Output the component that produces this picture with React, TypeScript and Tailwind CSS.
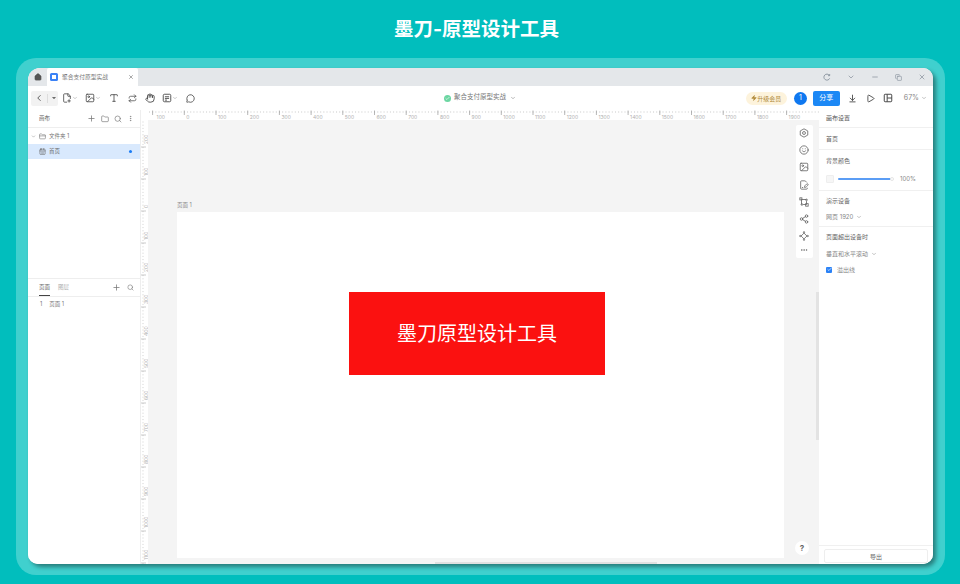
import React from "react";
import {
  ArrowDownToLine,
  ChevronDown,
  ChevronLeft,
  Copy,
  Ellipsis,
  EllipsisVertical,
  FilePenLine,
  FilePlus2,
  Folder,
  FolderClosed,
  Hand,
  Home,
  Image,
  MessageCircle,
  Minus,
  Play,
  Plus,
  Repeat,
  Search,
  Share2,
  Smile,
  Type,
  X,
  Zap,
  Check,
  CalendarDays,
} from "lucide-react";

const CJK = "font-['Inter','Noto_Sans_CJK_SC',sans-serif]";

function HorizontalRuler() {
  return (
    <svg width="678" height="10" className="block bg-white">
      {Array.from({ length: 212 }, (_, i) => (
        <line key={i} x1={8.5 + i * 3.17} x2={8.5 + i * 3.17} y1="1" y2="3" stroke="#c8c8c8" strokeWidth="0.5" />
      ))}
      {Array.from({ length: 21 }, (_, i) => {
        const x = 11.6 + i * 31.7;
        const label = i === 0 ? 100 : (i - 1) * 100;
        return (
          <g key={i}>
            <line x1={x} x2={x} y1="0.5" y2="5" stroke="#999" strokeWidth="0.7" />
            <text x={i === 0 ? x + 4 : x + 2} y="8.5" fontSize="5" fill="#b0b0b0" fontFamily="Inter, sans-serif">
              {label}
            </text>
          </g>
        );
      })}
    </svg>
  );
}

function VerticalRuler() {
  return (
    <svg width="7" height="444" className="block shrink-0 bg-white">
      {Array.from({ length: 140 }, (_, i) => (
        <line key={i} x1="1" x2="3" y1={2 + i * 3.2} y2={2 + i * 3.2} stroke="#d0d0d0" strokeWidth="0.5" />
      ))}
      {Array.from({ length: 14 }, (_, i) => {
        const y = 27 + i * 32;
        const label = i <= 2 ? (2 - i) * 100 : (i - 2) * 100;
        return (
          <g key={i}>
            <line x1="0" x2="5" y1={y} y2={y} stroke="#b5b5b5" strokeWidth="0.7" />
            <text
              x="6.5"
              y={y - 3}
              fontSize="5"
              fill="#b0b0b0"
              fontFamily="Inter, sans-serif"
              transform={`rotate(-90 6.5 ${y - 3})`}
            >
              {label}
            </text>
          </g>
        );
      })}
    </svg>
  );
}

function NoteIcon() {
  return (
    <svg width="10" height="10" viewBox="0 0 24 24" fill="none" stroke="currentColor" strokeWidth="2.2">
      <rect x="3" y="3" width="18" height="18" rx="3" />
      <path d="M7 9h10M7 13h10M7 17h5" />
    </svg>
  );
}

function PanelsIcon() {
  return (
    <svg width="10" height="10" viewBox="0 0 24 24" fill="none" stroke="currentColor" strokeWidth="2.4">
      <rect x="3" y="3" width="18" height="18" rx="2" />
      <path d="M10 3v18M10 12h11" />
    </svg>
  );
}

function HexDot() {
  return (
    <svg width="10" height="10" viewBox="0 0 24 24" fill="none" stroke="currentColor" strokeWidth="2">
      <path d="M12 2l9 5v10l-9 5-9-5V7z" />
      <circle cx="12" cy="12" r="3.5" />
    </svg>
  );
}

function VectorIcon() {
  return (
    <svg width="10" height="10" viewBox="0 0 24 24" fill="none" stroke="currentColor" strokeWidth="2">
      <path d="M6 6h12M6 6v12M18 10v8M10 18h8" />
      <rect x="2" y="2" width="5" height="5" />
      <rect x="16" y="16" width="6" height="6" />
      <circle cx="18" cy="7" r="2" />
      <circle cx="7" cy="18" r="2" />
    </svg>
  );
}

function DiamondIcon() {
  return (
    <svg width="10" height="10" viewBox="0 0 24 24" fill="none" stroke="currentColor" strokeWidth="2">
      <path d="M12 5l7 7-7 7-7-7z" />
      <circle cx="12" cy="3" r="1.6" />
      <circle cx="12" cy="21" r="1.6" />
      <circle cx="3" cy="12" r="1.6" />
      <circle cx="21" cy="12" r="1.6" />
    </svg>
  );
}

function ReloadC() {
  return (
    <svg width="8" height="8" viewBox="0 0 24 24" fill="none" stroke="currentColor" strokeWidth="2.5">
      <path d="M19 7a9 9 0 1 0 1 9" />
      <path d="M20 3v5h-5" />
    </svg>
  );
}

function LeftPanel() {
  return (
    <div className="flex w-[113px] shrink-0 flex-col border-r border-[#eeeeee] bg-white">
      <div className="flex h-[18px] shrink-0 items-center justify-between border-b border-[#eeeeee] pl-[11px] pr-[6px] text-[5.5px] text-[#555]">
        <span>画布</span>
        <div className="flex items-center gap-[5px] text-[#777]">
          <Plus size={9} />
          <Folder size={8} />
          <Search size={8} />
          <EllipsisVertical size={7} />
        </div>
      </div>
      <div className="flex h-[16px] items-center gap-[3px] pl-[3px] text-[5.5px] text-[#777]">
        <ChevronDown size={5} />
        <FolderClosed size={7} />
        <span>文件夹 1</span>
      </div>
      <div className="flex h-[15px] items-center gap-[3px] bg-[#d9e9fd] pl-[11px] pr-[8px] text-[5.5px] text-[#666]">
        <CalendarDays size={7} />
        <span>首页</span>
        <span className="ml-auto size-[3px] rounded-full bg-[#1a7cf5]" />
      </div>
      <div className="mt-[119px] flex h-[19px] items-center justify-between border-b border-t border-[#eeeeee] pl-[11px] pr-[6px] text-[5.5px]">
        <div className="flex h-full gap-[8px]">
          <span className="flex items-center border-b border-[#444] text-[#666]">页面</span>
          <span className="flex items-center text-[#aaa]">图层</span>
        </div>
        <div className="flex items-center gap-[6px] text-[#777]">
          <Plus size={9} />
          <Search size={7} />
        </div>
      </div>
      <div className="flex h-[15px] items-center gap-[7px] pl-[12px] text-[5.5px] text-[#777]">
        <span>1</span>
        <span>页面 1</span>
      </div>
    </div>
  );
}

function FloatingTools() {
  return (
    <div className="absolute left-[648px] top-[5px] flex h-[133px] w-[17px] flex-col items-center gap-[7.2px] rounded-[2px] bg-white pr-[1px] pt-[3px] text-[#666]">
      <HexDot />
      <Smile size={10} />
      <Image size={10} />
      <FilePenLine size={10} />
      <VectorIcon />
      <Share2 size={10} />
      <DiamondIcon />
      <Ellipsis size={8} className="-mt-[2px]" />
    </div>
  );
}

function Canvas() {
  return (
    <div className="relative flex-1 overflow-hidden bg-[#f4f4f4] pl-[29px] pt-[81px]">
      <p className="h-[11px] text-[5.5px] leading-[8px] text-[#888]">页面 1</p>
      <div className="h-[346px] w-[607px] bg-white pl-[172px] pt-[80px]">
        <div className="flex h-[83px] w-[256px] items-center justify-center bg-[#fb1110] text-[20px] text-white">
          墨刀原型设计工具
        </div>
      </div>
      <FloatingTools />
      <div className="absolute right-0 top-[172px] h-[148px] w-[3px] bg-[#e3e3e3]" />
      <div className="absolute bottom-0 left-[287px] h-[2px] w-[222px] bg-[#e0e0e0]" />
      <div className="absolute bottom-[9px] left-[647px] flex size-[14px] items-center justify-center rounded-full bg-white text-[8px] font-bold text-[#666]">
        ?
      </div>
    </div>
  );
}

function RightPanel() {
  return (
    <div className="flex w-[114px] shrink-0 flex-col bg-white text-[6px] text-[#666]">
      <div className="flex h-[18px] shrink-0 items-center border-b border-[#f0f0f0] pb-[2px] pl-[7px] text-[#555]">画布设置</div>
      <div className="flex h-[22px] shrink-0 items-center border-b border-[#f0f0f0] pb-[1px] pl-[7px]">首页</div>
      <div className="h-[41px] shrink-0 border-b border-[#f0f0f0] pl-[7px] pt-[7px]">
        <p className="leading-[8px]">背景颜色</p>
        <div className="mt-[9px] flex items-center">
          <span className="size-[8px] rounded-[1px] border border-[#eeeeee] bg-[#f6f6f6]" />
          <span className="ml-[4px] h-[2px] w-[53px] rounded-full bg-[#5b9df5]" />
          <span className="-ml-px size-[4px] rounded-full border border-[#e5e5e5] bg-white" />
          <span className="ml-[6px] text-[#888]">100%</span>
        </div>
      </div>
      <div className="h-[36px] shrink-0 border-b border-[#f0f0f0] pl-[7px] pt-[6px]">
        <p className="leading-[8px]">演示设备</p>
        <div className="mt-[7px] flex items-center gap-[3px] text-[#888]">
          <span>网页 1920</span>
          <ChevronDown size={6} />
        </div>
      </div>
      <div className="pl-[7px] pt-[6px]">
        <p className="leading-[8px]">页面超出设备时</p>
        <div className="mt-[8px] flex items-center gap-[3px] text-[#888]">
          <span>垂直和水平滚动</span>
          <ChevronDown size={6} />
        </div>
        <div className="mt-[7px] flex items-center gap-[5px] text-[#888]">
          <span className="flex size-[6px] items-center justify-center rounded-[1px] bg-[#2b82f6] text-white">
            <Check size={5} strokeWidth={3} />
          </span>
          <span>溢出线</span>
        </div>
      </div>
      <div className="mt-auto h-[19px] border-t border-[#f0f0f0] px-[5px] pt-[3px]">
        <div className="flex h-[14px] items-center justify-center rounded-[2px] border border-[#eeeeee] text-[#666]">导出</div>
      </div>
    </div>
  );
}

function Toolbar() {
  return (
    <div className="flex h-[24px] shrink-0 items-center bg-white pl-[3px] pr-[6px] text-[#4a4a4a]">
      <div className="flex h-[15px] w-[27px] items-center rounded-[2px] bg-[#f2f2f2] pl-[3px] text-[#444]">
        <ChevronLeft size={10} />
        <span className="ml-[3px] h-[9px] w-px bg-[#ddd]" />
        <ChevronDown size={6} fill="#444" className="ml-[3px]" />
      </div>
      <div className="ml-[4px] flex items-center gap-[7px]">
        <div className="flex items-center"><FilePlus2 size={10} /><ChevronDown size={6} className="text-[#999]" /></div>
        <div className="flex items-center"><Image size={10} /><ChevronDown size={6} className="text-[#999]" /></div>
        <Type size={10} className="ml-[1px]" />
        <Repeat size={9} strokeWidth={2} className="ml-[2px]" />
        <Hand size={10} strokeWidth={2.2} className="ml-[1px]" />
        <div className="flex items-center"><NoteIcon /><ChevronDown size={6} className="text-[#999]" /></div>
        <MessageCircle size={9} strokeWidth={2.2} className="ml-[1px]" />
      </div>
      <div className="ml-[249px] flex items-center gap-[3px] text-[6.5px] text-[#777]">
        <span className="flex size-[7px] items-center justify-center rounded-full bg-[#6cd6a2] text-white">
          <Check size={5} strokeWidth={3} />
        </span>
        <span>聚合支付原型实战</span>
        <ChevronDown size={6} className="ml-[1px]" />
      </div>
      <div className="ml-auto flex items-center">
        <span className="flex h-[13px] w-[41px] items-center justify-center rounded-full bg-[#fdf3dc] text-[6px] text-[#b08a3a]">
          <Zap size={6} fill="#b08a3a" />升级会员
        </span>
        <span className="ml-[7px] flex size-[13px] items-center justify-center rounded-full bg-[#0f78f0] text-[7px] text-white">1</span>
        <span className="ml-[6px] flex h-[15px] w-[27px] items-center justify-center rounded-[2px] bg-[#1c88f5] text-[7px] text-white">分享</span>
        <ArrowDownToLine size={9} strokeWidth={2.4} className="ml-[8px]" />
        <Play size={9} strokeWidth={2.4} className="ml-[9px]" />
        <span className="ml-[8px]"><PanelsIcon /></span>
        <span className="ml-[11px] text-[7px] text-[#888]">67%</span>
        <ChevronDown size={6} className="ml-[2px] text-[#888]" />
      </div>
    </div>
  );
}

export default function App() {
  return (
    <div className={`flex h-[584px] w-[960px] flex-col overflow-hidden bg-[#01bebd] ${CJK}`}>
      <h1 className="flex h-[58px] shrink-0 items-center justify-center pr-[7px] pt-[2px] text-[19.5px] font-bold text-white">
        墨刀-原型设计工具
      </h1>
      <div className="ml-[16px] h-[517px] w-[929px] rounded-[20px] bg-[#40d0ce] px-[12px] py-[10px]">
        <div className="flex h-[496px] w-[905px] flex-col overflow-hidden rounded-[10px] rounded-tl-[12px] bg-white shadow-[3px_3px_4px_rgba(0,0,0,0.4)]">
          <div className="flex h-[18px] shrink-0 items-center bg-[#e4e7ea] text-[#667]">
            <div className="flex h-full w-[19px] items-center justify-center text-[#555]">
              <Home size={8} fill="#555" />
            </div>
            <div className="flex h-full w-[91px] items-center rounded-t-[2px] bg-white pl-[3px] pr-[4px] text-[5.75px] text-[#777]">
              <span className="mr-[4px] flex size-[8px] items-center justify-center rounded-[1.5px] bg-[#3b82f6]">
                <span className="h-[4px] w-[4px] bg-white" />
              </span>
              <span>聚合支付原型实战</span>
              <X size={6} className="ml-auto text-[#555]" />
            </div>
            <div className="ml-auto flex items-center gap-[16px] pr-[7px] text-[#808a96]">
              <ReloadC />
              <ChevronDown size={8} />
              <Minus size={8} />
              <Copy size={7} />
              <X size={8} />
            </div>
          </div>
          <Toolbar />
          <div className="flex min-h-0 flex-1">
            <LeftPanel />
            <div className="flex w-[678px] shrink-0 flex-col">
              <HorizontalRuler />
              <div className="flex min-h-0 flex-1">
                <VerticalRuler />
                <Canvas />
              </div>
            </div>
            <RightPanel />
          </div>
        </div>
      </div>
    </div>
  );
}
